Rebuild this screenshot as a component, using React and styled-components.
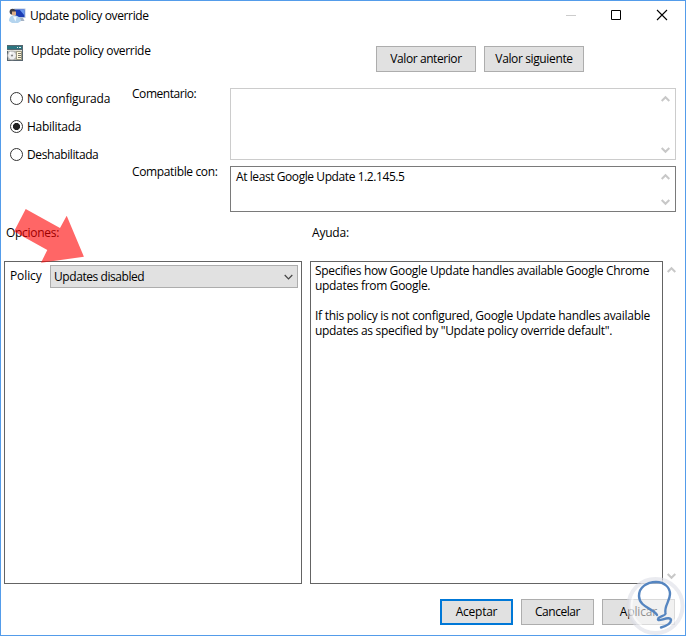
import React, { useState } from 'react'
import styled, { createGlobalStyle, css } from 'styled-components'

const GlobalStyle = createGlobalStyle`
  body {
    margin: 0;
    background: #ffffff;
  }
`

const Window = styled.div`
  position: relative;
  box-sizing: border-box;
  width: 686px;
  height: 636px;
  display: flex;
  flex-direction: column;
  overflow: hidden;
  border: 1px solid #549cea;
  background: #ffffff;
  color: #000000;
  font-family: "Open Sans", "Noto Sans", sans-serif;
  font-size: 12px;
  line-height: 15px;
`

const Label = styled.span`
  white-space: nowrap;
  letter-spacing: ${props => props.$spacing || -0.36}px;
`

const TitleBar = styled.header`
  display: flex;
  height: 30px;
  padding-left: 8px;
`

const Title = styled.h1`
  flex: 1;
  margin: 7px 0 0 4px;
  font-size: 12px;
  font-weight: normal;
`

const Caption = styled.div`
  display: flex;
  gap: 35px;
  padding: 9px 18px 0 0;
`

const Icon = styled.svg`
  display: block;
  flex: none;
  overflow: visible;
  margin-top: ${props => props.$top || 0}px;
`

const PolicyHeader = styled.div`
  display: flex;
  height: 57px;
  padding: 14px 0 0 6px;
  box-sizing: border-box;
`

const PolicyName = styled.div`
  width: 345px;
  margin: -2px 0 0 8px;
`

const Button = styled.button`
  box-sizing: border-box;
  width: ${props => props.$width || 73}px;
  height: 26px;
  padding: 0 0 1px;
  border: 1px solid #adadad;
  background: #e1e1e1;
  color: #000000;
  font: inherit;

  ${props => props.$primary && css`
    border: 2px solid #0078d7;
  `}
`

const ButtonRow = styled.div`
  display: flex;
  gap: 8px;
  margin-top: ${props => props.$top || 0}px;
`

const Settings = styled.section`
  display: grid;
  grid-template-columns: 122px 98px 446px;
  height: 136px;
  padding-left: 9px;
`

const RadioList = styled.div`
  display: flex;
  flex-direction: column;
  gap: 13px;
  padding-top: 3px;
`

const RadioLabel = styled.label`
  display: flex;
  align-items: center;
  gap: 4px;
`

const RadioInput = styled.input`
  appearance: none;
  box-sizing: border-box;
  width: 13px;
  height: 13px;
  margin: 0;
  border: 1px solid #333333;
  border-radius: 50%;
  background: #ffffff;

  &:checked {
    background: radial-gradient(circle, #222222 3.2px, #ffffff 3.9px);
  }
`

const FieldNames = styled.div`
  display: flex;
  flex-direction: column;
  gap: 63px;
  margin-top: -2px;
`

const Fields = styled.div`
  display: flex;
  flex-direction: column;
  gap: 6px;
`

const Field = styled.div`
  box-sizing: border-box;
  display: flex;
  justify-content: space-between;
  height: ${props => props.$height}px;
  padding: 2px 5px 0;
  border: 1px solid ${props => props.$color};
`

const ScrollBar = styled.div`
  display: flex;
  flex-direction: column;
  justify-content: space-between;
  padding: ${props => props.$padding};
`

const SectionNames = styled.div`
  display: grid;
  grid-template-columns: 306px 1fr;
  height: 37px;
  padding: 1px 0 0 5px;
  box-sizing: border-box;
`

const Panels = styled.main`
  display: flex;
  height: 323px;
  padding-left: 3px;
`

const Panel = styled.section`
  box-sizing: border-box;
  width: ${props => props.$width}px;
  border: 1px solid #646464;
`

const Options = styled(Panel)`
  margin-right: 8px;
  padding: 3px 3px 0 5px;
`

const Help = styled(Panel)`
  padding: 1px 0 0 4px;
`

const HelpText = styled.p`
  margin: 0 0 15px;
`

const OptionRow = styled.div`
  display: flex;
  justify-content: space-between;
  line-height: 21px;
`

const Select = styled.div`
  box-sizing: border-box;
  display: flex;
  align-items: center;
  justify-content: space-between;
  width: 248px;
  height: 23px;
  padding: 0 4px 0 3px;
  border: 1px solid #adadad;
  background: #e1e1e1;
`

const Footer = styled.footer`
  display: flex;
  justify-content: flex-end;
  padding: 15px 10px 0 0;
`

const Overlay = styled.svg`
  position: absolute;
  left: -1px;
  top: -1px;
  pointer-events: none;
`

const Chevron = ({ up, color = '#c8c8c8', width = 2 }) =>
  <Icon width="9" height="6" viewBox="0 0 9 6">
    <path
      d={up ? 'M.7 5 4.5 1.2 8.3 5' : 'M.7 1 4.5 4.8 8.3 1'}
      fill="none"
      stroke={color}
      strokeWidth={width}
    />
  </Icon>

const Scroll = ({ padding }) =>
  <ScrollBar $padding={padding}>
    <Chevron up />
    <Chevron />
  </ScrollBar>

const UserPolicyIcon = () =>
  <Icon width="17" height="16" viewBox="0 0 17 16" $top={7}>
    <path d="M5 .5h11.5v9.500H5z" fill="#b4c4dc" />
    <path d="M6 1.5h9.500v7.500H6z" fill="#1a3cb4" />
    <path d="M10.500 1.500h5v6z" fill="#6a98ee" />
    <path d="M10 10h4l1.500 3H10z" fill="#a4b2c4" />
    <circle cx="3.6" cy="3.8" r="3" fill="#3c3c46" />
    <path d="M3 3.500h4v3.200L5.500 8.500 3 7z" fill="#dcae88" />
    <path d="M0 13c0-3.500 1.500-5.500 5-5.500s7 2 7 5.500l-3 2H3z" fill="#b4d4ee" />
    <path d="M4 8.500l2.500 5 1.200-5z" fill="#f4faff" />
  </Icon>

const SettingIcon = () =>
  <Icon width="16" height="16" viewBox="0 0 16 16">
    <path d="M0 0h16v16H0z" fill="#59666f" />
    <path d="M0 1h15v3H0z" fill="#2c7580" />
    <path d="M10 2h1v1h-1zM12 2h2v1h-2z" fill="#e5eeee" />
    <path d="M0 5h15v1H0z" fill="#e4e4dc" />
    <path d="M1 6h14v9H1z" fill="#b4b4ac" />
    <circle cx="5" cy="10.5" r="4.4" fill="#eeeeee" stroke="#a4a4a4" strokeWidth=".8" />
    <path d="M5 10.5L2 7.5l2-1z" fill="#ffffff" />
    <circle cx="5" cy="10.5" r="1.1" fill="#868686" />
    <path d="M9.5 6.5h5v8h-5z" fill="#fff8dc" stroke="#8c8870" strokeWidth=".8" />
    <path d="M11 8.5h3M11 10.5h3M11 12.5h3" stroke="#77756a" />
  </Icon>

const STATES = [
  { name: 'No configurada', spacing: -0.22 },
  { name: 'Habilitada', spacing: -0.28 },
  { name: 'Deshabilitada', spacing: -0.4 }
]

const App = () => {
  const [state, setState] = useState('Habilitada')

  return (
    <>
      <GlobalStyle />
      <Window>
        <TitleBar>
          <UserPolicyIcon />
          <Title><Label>Update policy override</Label></Title>
          <Caption>
            <Icon width="10" height="11"><path d="M0 5.5h10" stroke="#cccccc" /></Icon>
            <Icon width="11" height="11"><path d="M.5.5h9v9h-9z" fill="none" stroke="#000000" /></Icon>
            <Icon width="10" height="11"><path d="M0 0l10 10M10 0L0 10" stroke="#000000" strokeWidth="1.1" /></Icon>
          </Caption>
        </TitleBar>
        <PolicyHeader>
          <SettingIcon />
          <PolicyName><Label $spacing={-0.32}>Update policy override</Label></PolicyName>
          <ButtonRow $top={1}>
            <Button $width={100}><Label $spacing={-0.42}>Valor anterior</Label></Button>
            <Button $width={100}><Label $spacing={-0.37}>Valor siguiente</Label></Button>
          </ButtonRow>
        </PolicyHeader>
        <Settings>
          <RadioList>
            {STATES.map(({ name, spacing }) =>
              <RadioLabel key={name}>
                <RadioInput
                  type="radio"
                  name="state"
                  checked={state === name}
                  onChange={() => setState(name)}
                />
                <Label $spacing={spacing}>{name}</Label>
              </RadioLabel>
            )}
          </RadioList>
          <FieldNames>
            <Label $spacing={-0.45}>Comentario:</Label>
            <Label>Compatible con:</Label>
          </FieldNames>
          <Fields>
            <Field $height={72} $color="#cccccc">
              <span />
              <Scroll padding="5px 0 6px" />
            </Field>
            <Field $height={46} $color="#7a7a7a">
              <Label $spacing={-0.42}>At least Google Update 1.2.145.5</Label>
              <Scroll padding="5px 0 6px" />
            </Field>
          </Fields>
        </Settings>
        <SectionNames>
          <Label $spacing={-0.28}>Opciones:</Label>
          <Label $spacing={-0.2}>Ayuda:</Label>
        </SectionNames>
        <Panels>
          <Options $width={298}>
            <OptionRow>
              <Label $spacing={-0.1}>Policy</Label>
              <Select>
                <Label $spacing={-0.43}>Updates disabled</Label>
                <Chevron color="#444444" width={1.2} />
              </Select>
            </OptionRow>
          </Options>
          <Help $width={353}>
            <HelpText>
              <Label $spacing={-0.32}>Specifies how Google Update handles available Google Chrome</Label><br />
              <Label $spacing={-0.32}>updates from Google.</Label>
            </HelpText>
            <HelpText>
              <Label $spacing={-0.28}>If this policy is not configured, Google Update handles available</Label><br />
              <Label $spacing={-0.32}>updates as specified by "Update policy override default".</Label>
            </HelpText>
          </Help>
          <Scroll padding="6px 0 5px 4px" />
        </Panels>
        <Footer>
          <ButtonRow>
            <Button $primary><Label $spacing={-0.25}>Aceptar</Label></Button>
            <Button><Label $spacing={-0.45}>Cancelar</Label></Button>
            <Button><Label $spacing={-0.15}>Aplicar</Label></Button>
          </ButtonRow>
        </Footer>
        <Overlay width="686" height="636">
          <path d="M25.7 209L60 228l6.7-12.3 17.2 41-42.9 6 6.3-12.7L14 231.5z" fill="#ff0000" fillOpacity=".6" />
          <circle cx="655.5" cy="606" r="27" fill="#ffffff" fillOpacity=".55" stroke="#dcdee6" strokeOpacity=".6" strokeWidth="4" />
          <circle cx="655.5" cy="606" r="24" fill="none" stroke="#ffffff" strokeOpacity=".6" strokeWidth="2" />
          <path
            d="M657 615c-3-6-18-8-18-19 0-9 8-14 17-14s14 6 14 12c0 7-6 12-4.500 19 1 3-7 3-7.500 6-1 4 12-4 13 1 0 3-5 6-10 7.500"
            fill="none" stroke="#5585c0" strokeWidth="2.4" strokeLinecap="round"
          />
        </Overlay>
      </Window>
    </>
  )
}

export default App
